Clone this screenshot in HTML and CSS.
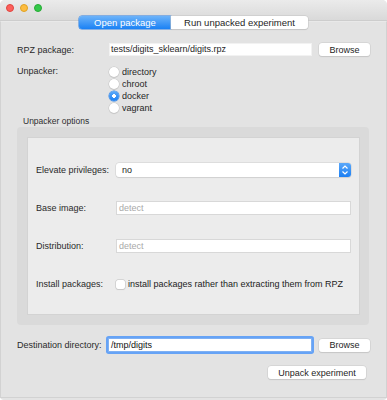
FILE: index.html
```html
<!DOCTYPE html>
<html lang="en">

<head>
  <meta charset="UTF-8">
  <meta name="viewport" content="width=device-width, initial-scale=1.0">
  <title>ReproZip</title>
  <link rel="stylesheet" href="styles.css">
</head>

<body>
  <div class="window">
    <header class="titlebar">
      <span class="light red"></span>
      <span class="light yellow"></span>
      <span class="light green"></span>
    </header>
    <main class="pane">
      <nav class="tabs">
        <span class="tab active">Open package</span>
        <span class="tab">Run unpacked experiment</span>
      </nav>

      <div class="row rpz-row">
        <span class="lbl">RPZ package:</span>
        <div class="field plain">tests/digits_sklearn/digits.rpz</div>
        <button class="btn">Browse</button>
      </div>

      <div class="unpacker">
        <span class="lbl">Unpacker:</span>
        <ul class="radios">
          <li><span class="radio"></span>directory</li>
          <li><span class="radio"></span>chroot</li>
          <li><span class="radio checked"></span>docker</li>
          <li><span class="radio"></span>vagrant</li>
        </ul>
      </div>

      <div class="group-title">Unpacker options</div>
      <section class="group">
        <div class="options">
          <div class="opt-row">
            <span class="opt-lbl">Elevate privileges:</span>
            <div class="select">
              <span class="select-text">no</span>
              <span class="arrows">
                <svg width="12" height="14" viewBox="0 0 12 14">
                  <path d="M3.5 5.5 L6 3 L8.5 5.5" fill="none" stroke="#fff" stroke-width="1.2" />
                  <path d="M3.5 8.5 L6 11 L8.5 8.5" fill="none" stroke="#fff" stroke-width="1.2" />
                </svg>
              </span>
            </div>
          </div>
          <div class="opt-row">
            <span class="opt-lbl">Base image:</span>
            <div class="field placeholder">detect</div>
          </div>
          <div class="opt-row">
            <span class="opt-lbl">Distribution:</span>
            <div class="field placeholder">detect</div>
          </div>
          <div class="opt-row">
            <span class="opt-lbl">Install packages:</span>
            <label class="check"><span class="box"></span>install packages rather than extracting them from RPZ</label>
          </div>
        </div>
      </section>

      <div class="row dest-row">
        <span class="lbl">Destination directory:</span>
        <div class="field focused">/tmp/digits</div>
        <button class="btn">Browse</button>
      </div>

      <div class="actions">
        <button class="btn wide">Unpack experiment</button>
      </div>
    </main>
  </div>
</body>

</html>
```

FILE: styles.css
```css
* {
  margin: 0;
  padding: 0;
  box-sizing: border-box;
  list-style: none;
}

body {
  width: 387px;
  height: 400px;
  background: #fff;
  font-family: "Liberation Sans", Arial, sans-serif;
  font-size: 9px;
  color: #262626;
  overflow: hidden;
}

.window {
  display: flex;
  flex-direction: column;
  width: 387px;
  height: 400px;
  background: #e3e3e3;
  border-radius: 5px 5px 4px 4px;
  overflow: hidden;
}

/* title bar */
.titlebar {
  display: flex;
  align-items: center;
  gap: 6px;
  height: 21px;
  padding: 0 0 5px 6px;
  background: linear-gradient(#ebebeb, #d9d9d9);
  border-bottom: 1px solid #cdcdcd;
}

.light {
  width: 8px;
  height: 8px;
  border-radius: 50%;
}

.red {
  background: #fc605c;
  border: 1px solid #e0443e;
}

.yellow {
  background: #fdbc40;
  border: 1px solid #dea123;
}

.green {
  background: #34c84a;
  border: 1px solid #27aa35;
}

/* tab pane */
.pane {
  flex: 1;
  display: flex;
  flex-direction: column;
  padding: 0 16px;
  margin-bottom: 2px;
  border: 1px solid #d2d2d2;
  border-top-color: #e9e9e9;
  background: #e3e3e3;
}

.tabs {
  display: flex;
  justify-content: center;
  margin-top: -6px;
}

.tab {
  height: 13px;
  line-height: 13px;
  font-size: 9.5px;
  text-align: center;
  background: #fff;
  color: #1e1e1e;
  box-shadow: 0 0 0 0.5px #c4c4c4, 0 1px 1px rgba(0, 0, 0, 0.12);
}

.tab:first-child {
  width: 92px;
  border-radius: 3px 0 0 3px;
}

.tab:last-child {
  width: 137px;
  border-radius: 0 3px 3px 0;
}

.tab.active {
  background: linear-gradient(#6cb3fa, #1a81f4);
  color: #fff;
  box-shadow: 0 0 0 0.5px #2a7fe6;
}

/* form rows */
.row {
  display: grid;
  column-gap: 7px;
  align-items: center;
}

.rpz-row {
  grid-template-columns: 85px 1fr 51px;
  margin-top: 14px;
}

.dest-row {
  grid-template-columns: 84px 1fr 51px;
  margin-top: 13px;
}

.lbl {
  color: #2a2a2a;
  white-space: nowrap;
}

.field {
  height: 13px;
  line-height: 13px;
  padding-left: 2px;
  background: #fff;
  border: 1px solid #d8d8d8;
  white-space: nowrap;
  overflow: hidden;
}

.field.plain {
  border-color: #f2f2f2;
  line-height: 11px;
  padding-left: 1px;
}

.field.placeholder {
  color: #a9a9a9;
  height: 14px;
  line-height: 12px;
}

.field.focused {
  height: 14px;
  line-height: 12px;
  border-color: #7fb0f2;
  box-shadow: 0 0 0 2px #66a3f6;
  border-radius: 1px;
  color: #111;
}

.btn {
  height: 13px;
  font-family: inherit;
  font-size: 9px;
  color: #1e1e1e;
  background: #fff;
  border: none;
  border-radius: 3px;
  box-shadow: 0 0 0 0.5px #cacaca, 0 1px 1px rgba(0, 0, 0, 0.14);
}

/* unpacker radios */
.unpacker {
  display: grid;
  grid-template-columns: 92px 1fr;
  margin-top: 10px;
}

.unpacker .lbl {
  line-height: 10px;
}

.radios li {
  display: flex;
  align-items: center;
  gap: 3px;
  height: 12px;
}

.radio {
  width: 10px;
  height: 10px;
  border-radius: 50%;
  background: #fff;
  box-shadow: 0 0 0 0.5px #c2c2c2, 0 1px 1px rgba(0, 0, 0, 0.1);
}

.radio.checked {
  background: radial-gradient(circle, #fff 0 1.6px, transparent 2.1px), linear-gradient(#5fabf9, #1c80f3);
  box-shadow: 0 0 0 0.5px #2a7fe6;
}

/* group box */
.group-title {
  margin-top: 2px;
  padding-left: 6px;
  height: 11px;
  line-height: 11px;
  font-size: 8.5px;
  color: #2e2e2e;
}

.group {
  margin-right: 1px;
  padding: 10px 9px 10px 10px;
  background: #dadada;
  border-radius: 4px;
}

.options {
  display: flex;
  flex-direction: column;
  gap: 24px;
  padding: 25px 8px 23px 8px;
  background: #ececec;
  border: 1px solid #d3d3d3;
}

.opt-row {
  display: grid;
  grid-template-columns: 74px 1fr;
  column-gap: 6px;
  align-items: center;
  height: 14px;
}

.opt-lbl {
  white-space: nowrap;
  color: #2a2a2a;
}

.select {
  display: flex;
  height: 14px;
  background: #fff;
  border-radius: 3px;
  box-shadow: 0 0 0 0.5px #cdcdcd, 0 1px 1px rgba(0, 0, 0, 0.1);
}

.select-text {
  flex: 1;
  line-height: 14px;
  padding-left: 6px;
  color: #1e1e1e;
}

.arrows {
  width: 12px;
  height: 14px;
  background: linear-gradient(#5ba8f9, #1c7ff3);
  border-radius: 0 3px 3px 0;
}

.arrows svg {
  display: block;
}

.check {
  display: flex;
  align-items: center;
  gap: 3px;
  white-space: nowrap;
  color: #222;
}

.box {
  width: 9px;
  height: 9px;
  background: #fff;
  border-radius: 2px;
  box-shadow: 0 0 0 0.5px #bdbdbd, 0 1px 1px rgba(0, 0, 0, 0.1);
}

/* bottom action */
.actions {
  display: flex;
  justify-content: flex-end;
  margin-top: 14px;
  padding-right: 4px;
}

.btn.wide {
  width: 98px;
}
```
